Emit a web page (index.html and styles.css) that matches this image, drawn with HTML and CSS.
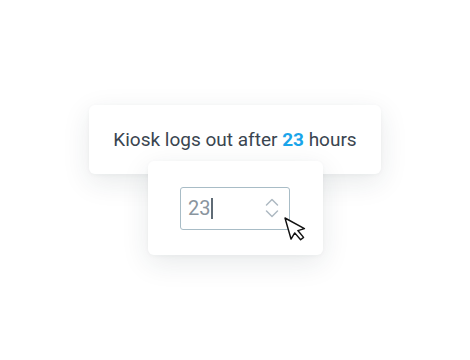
FILE: index.html
```html
<!DOCTYPE html>
<html>
<head>
<meta charset="utf-8">
<link rel="stylesheet" href="styles.css">
</head>
<body>
<div class="stage">
  <div class="card card-message">
    <p class="message">Kiosk logs out after <strong class="hours">23</strong> hours</p>
  </div>
  <div class="card card-input">
    <div class="number-field">
      <span class="value">23</span><span class="caret"></span>
      <svg class="spinner" width="16" height="22" viewBox="0 0 16 22" fill="none" stroke="#aeb9c2" stroke-width="1.5" stroke-linecap="round" stroke-linejoin="round">
        <path d="M2.5 8 L8 2.5 L13.5 8"/>
        <path d="M2.5 14 L8 19.5 L13.5 14"/>
      </svg>
      <svg class="pointer" width="30" height="32" viewBox="0 0 30 32">
        <g transform="translate(3 2) rotate(-16) scale(1.25)">
          <path d="M0 0 L0 17.5 L4.2 13.6 L7.2 20.2 L10 19 L7.1 12.5 L12.6 12.5 Z" fill="#fff" stroke="#111" stroke-width="1.15" stroke-linejoin="round"/>
        </g>
      </svg>
    </div>
  </div>
</div>
</body>
</html>
```
FILE: styles.css
```css
html, body {
  margin: 0;
  padding: 0;
  background: #ffffff;
}
body {
  width: 470px;
  height: 360px;
  font-family: Roboto, "Liberation Sans", sans-serif;
}
.stage {
  display: flex;
  flex-direction: column;
  align-items: center;
  padding-top: 105px;
}
.card {
  background: #fff;
  border-radius: 6px;
  box-shadow: 0 8px 28px rgba(30, 45, 60, 0.10), 0 1px 4px rgba(30, 45, 60, 0.04);
}
.card-message {
  width: 292px;
  height: 69px;
  display: flex;
  align-items: center;
  justify-content: center;
}
.message {
  margin: 0;
  font-size: 19px;
  color: #3a4550;
}
.hours {
  color: #1aa5ea;
  font-weight: 700;
}
.card-input {
  position: relative;
  z-index: 1;
  margin-top: -13px;
  width: 175px;
  height: 94px;
  display: flex;
  align-items: center;
  justify-content: center;
}
.number-field {
  position: relative;
  box-sizing: border-box;
  width: 110px;
  height: 43px;
  border: 1.5px solid #a8bcc6;
  border-radius: 3px;
  display: flex;
  align-items: center;
  padding-left: 7px;
}
.value {
  font-size: 20px;
  color: #8a959e;
}
.caret {
  width: 1.5px;
  height: 21px;
  background: #5f6b75;
  margin-left: 1px;
}
.spinner {
  position: absolute;
  right: 9px;
  top: 9px;
}
.pointer {
  position: absolute;
  left: 101px;
  top: 28px;
}
```
